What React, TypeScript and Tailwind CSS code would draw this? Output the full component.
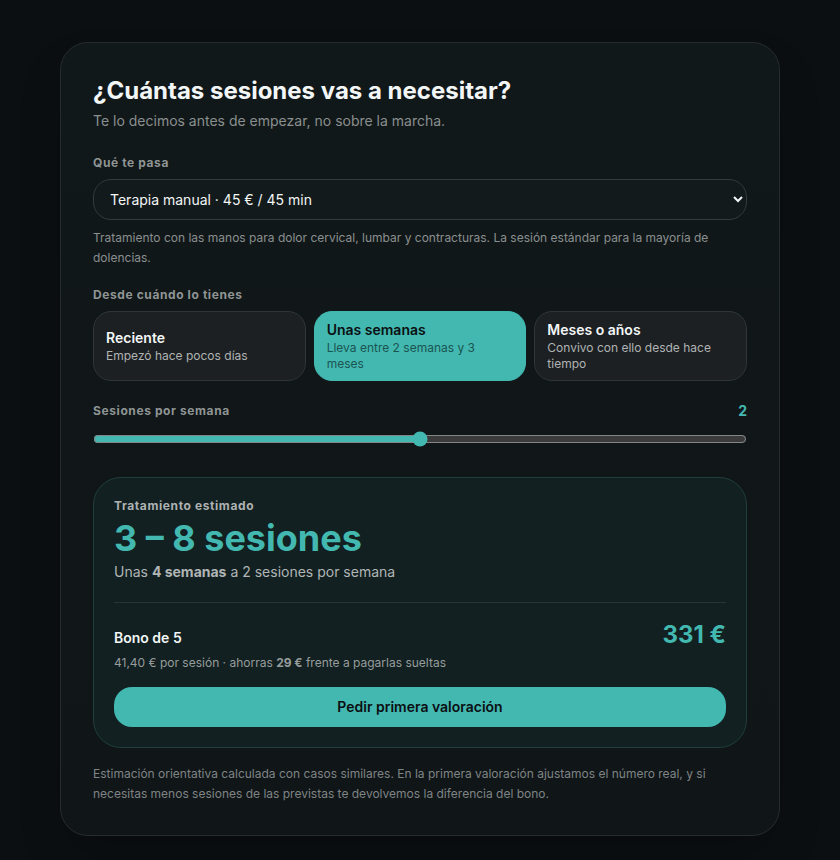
import React, { useState } from 'react';

const therapies = [
  {
    id: 'manual',
    label: 'Terapia manual · 45 € / 45 min',
    description:
      'Tratamiento con las manos para dolor cervical, lumbar y contracturas. La sesión estándar para la mayoría de dolencias.',
  },
];

const durations = [
  { id: 'recent', title: 'Reciente', detail: 'Empezó hace pocos días' },
  { id: 'weeks', title: 'Unas semanas', detail: 'Lleva entre 2 semanas y 3 meses' },
  { id: 'years', title: 'Meses o años', detail: 'Convivo con ello desde hace tiempo' },
];

const App = () => {
  const [therapy, setTherapy] = useState('manual');
  const [duration, setDuration] = useState('weeks');
  const [perWeek, setPerWeek] = useState(2);
  const selected = therapies.find((t) => t.id === therapy) ?? therapies[0];

  return (
    <main className="min-h-screen bg-[#0b0f12] px-4 pt-[42px] pb-6 font-['Inter',sans-serif] text-[#f3f6f6]">
      <section className="mx-auto max-w-[720px] rounded-[28px] border border-[#262c2e] bg-linear-to-b from-[#111819] to-[#101518] px-8 pt-8 pb-[31px] shadow-2xl">
        <h1 className="text-2xl leading-8 font-bold">¿Cuántas sesiones vas a necesitar?</h1>
        <p className="mt-0.5 text-sm leading-6 text-[#8a8f8f]">
          Te lo decimos antes de empezar, no sobre la marcha.
        </p>

        <label htmlFor="therapy" className="mt-5 block text-xs leading-5 font-bold tracking-wider text-[#8f9494]">
          Qué te pasa
        </label>
        <select
          id="therapy"
          value={therapy}
          onChange={(e) => setTherapy(e.target.value)}
          className="mt-1.5 block h-[41px] w-full rounded-[18px] border border-[#343b3d] bg-[#121a1b] px-3 text-sm"
        >
          {therapies.map((t) => (
            <option key={t.id} value={t.id}>{t.label}</option>
          ))}
        </select>
        <p className="mt-2 text-xs leading-5 text-[#8a8f8f]">{selected.description}</p>

        <fieldset className="mt-[17px]">
          <legend className="text-xs leading-5 font-bold tracking-wider text-[#8f9494]">
            Desde cuándo lo tienes
          </legend>
          <div className="mt-1.5 grid grid-cols-3 gap-2">
            {durations.map((d) => (
              <button
                key={d.id}
                type="button"
                aria-pressed={duration === d.id}
                onClick={() => setDuration(d.id)}
                className={`flex h-[70px] flex-col justify-center rounded-[18px] border px-3 text-left ${
                  duration === d.id
                    ? 'border-[#42b8b0] bg-[#42b8b0] text-[#0b0f12]'
                    : 'border-[#303537] bg-[#1c2022]'
                }`}
              >
                <span className="text-sm leading-5 font-semibold">{d.title}</span>
                <span className={`text-xs leading-4 ${duration === d.id ? 'text-[#1b5552]' : 'text-[#b0b3b4]'}`}>
                  {d.detail}
                </span>
              </button>
            ))}
          </div>
        </fieldset>

        <div className="mt-5 flex items-center justify-between">
          <label htmlFor="per-week" className="text-xs leading-5 font-bold tracking-wider text-[#8f9494]">
            Sesiones por semana
          </label>
          <output htmlFor="per-week" className="text-sm leading-5 font-bold text-[#42b8b0]">{perWeek}</output>
        </div>
        <input
          id="per-week"
          type="range"
          min={1}
          max={3}
          value={perWeek}
          onChange={(e) => setPerWeek(Number(e.target.value))}
          className="mt-2.5 block h-4 w-full accent-[#42b8b0] scheme-dark"
        />

        <div className="mt-[30px] rounded-[28px] border border-[#1f3f3d] bg-[#122021] p-5">
          <p className="text-xs leading-4 font-bold tracking-wider text-[#adb2b2]">Tratamiento estimado</p>
          <p className="mt-1 text-4xl leading-10 font-bold text-[#42b8b0]">3 – 8 sesiones</p>
          <p className="mt-1 text-sm leading-5 text-[#b0b5b5]">
            Unas <strong>4 semanas</strong> a {perWeek} sesiones por semana
          </p>
          <div className="mt-5 flex items-baseline justify-between border-t border-[#273435] pt-4">
            <span className="text-sm font-semibold">Bono de 5</span>
            <span className="text-2xl leading-8 font-bold text-[#42b8b0]">331 €</span>
          </div>
          <p className="mt-0.5 text-xs leading-5 text-[#969c9c]">
            41,40 € por sesión · ahorras <strong>29 €</strong> frente a pagarlas sueltas
          </p>
          <button type="button" className="mt-3.5 h-10 w-full rounded-[18px] bg-[#42b8b0] text-sm font-semibold text-[#0b0f12]">
            Pedir primera valoración
          </button>
        </div>
        <p className="mt-4 text-xs leading-5 text-[#7f8484]">
          Estimación orientativa calculada con casos similares. En la primera valoración ajustamos el número real, y si
          necesitas menos sesiones de las previstas te devolvemos la diferencia del bono.
        </p>
      </section>
    </main>
  );
};

export default App;
